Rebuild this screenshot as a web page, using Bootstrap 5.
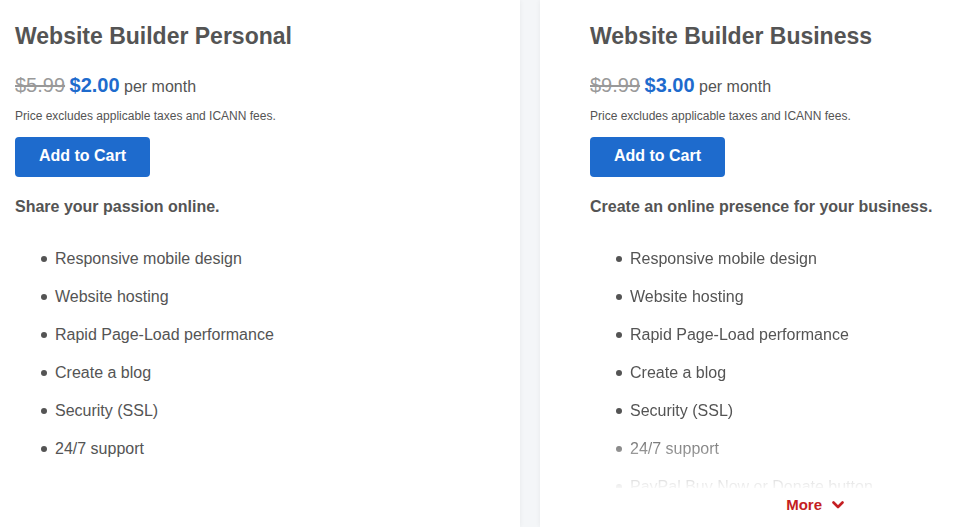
<!DOCTYPE html>
<html lang="en">
<head>
<meta charset="utf-8">
<meta name="viewport" content="width=device-width, initial-scale=1">
<title>Website Builder plans</title>
<link href="https://cdn.jsdelivr.net/npm/bootstrap@5.3.0/dist/css/bootstrap.min.css" rel="stylesheet">
<style>
  body { background: #f4f6f8; color: #545454; font-family: "Liberation Sans", Arial, sans-serif; font-size: 16px; }
  .plans { gap: 20px; }
  .plan { background: #fff; box-shadow: 0 0 5px rgba(0, 0, 0, .06); padding-top: 22px; min-width: 0; }
  .plan-personal { flex: 505 1 0; padding-left: 15px; }
  .plan-business { flex: 386 1 0; padding-left: 50px; }
  .plan-title { font-size: 23px; line-height: 28px; font-weight: 700; margin-bottom: 20px; }
  .price { line-height: 30px; margin-bottom: 2px; }
  .price-old, .price-new { font-size: 20px; }
  .price-old { color: #999; }
  .price-new { color: #1e6bcd; font-weight: 700; }
  .fees { font-size: 12px; line-height: 24px; margin-bottom: 9px; }
  .btn-cart { --bs-btn-bg: #1e6bcd; --bs-btn-color: #fff; --bs-btn-hover-bg: #1859ad; --bs-btn-hover-color: #fff; --bs-btn-border-radius: 4px; width: 135px; height: 40px; line-height: 24px; padding: 7px 0 9px; border: 0; font-weight: 700; }
  .tagline { line-height: 24px; margin: 18px 0 28px; font-weight: 700; }
  .features { padding-left: 26px; margin-bottom: 0; list-style: none; }
  .features li { display: flex; align-items: center; gap: 8px; line-height: 24px; margin-bottom: 14px; }
  .features li::before { content: ""; width: 6px; height: 6px; border-radius: 50%; background: currentColor; }
  .preview { max-height: 241px; overflow: hidden; -webkit-mask-image: linear-gradient(#000 calc(100% - 60px), rgba(0, 0, 0, .05)); mask-image: linear-gradient(#000 calc(100% - 60px), rgba(0, 0, 0, .05)); }
  .more-row { padding-right: 132px; margin-top: 6px; }
  .btn-more { --bs-btn-color: #c41e22; --bs-btn-hover-color: #951418; font-size: 15px; line-height: 22px; font-weight: 700; gap: 10px; }
</style>
</head>
<body>
<main class="plans d-flex min-vh-100">
  <section class="plan plan-personal">
    <h2 class="plan-title">Website Builder Personal</h2>
    <p class="price"><s class="price-old">$5.99</s> <span class="price-new">$2.00</span> per month</p>
    <p class="fees">Price excludes applicable taxes and ICANN fees.</p>
    <button type="button" class="btn btn-cart d-block">Add to Cart</button>
    <p class="tagline">Share your passion online.</p>
    <ul class="features">
      <li>Responsive mobile design</li>
      <li>Website hosting</li>
      <li>Rapid Page-Load performance</li>
      <li>Create a blog</li>
      <li>Security (SSL)</li>
      <li>24/7 support</li>
    </ul>
  </section>
  <section class="plan plan-business">
    <h2 class="plan-title">Website Builder Business</h2>
    <p class="price"><s class="price-old">$9.99</s> <span class="price-new">$3.00</span> per month</p>
    <p class="fees">Price excludes applicable taxes and ICANN fees.</p>
    <button type="button" class="btn btn-cart d-block">Add to Cart</button>
    <p class="tagline">Create an online presence for your business.</p>
    <div class="preview">
      <ul class="features">
        <li>Responsive mobile design</li>
        <li>Website hosting</li>
        <li>Rapid Page-Load performance</li>
        <li>Create a blog</li>
        <li>Security (SSL)</li>
        <li>24/7 support</li>
        <li>PayPal Buy Now or Donate button</li>
      </ul>
    </div>
    <div class="more-row d-flex justify-content-end">
      <button type="button" class="btn btn-more d-inline-flex align-items-center border-0 p-0">More
        <svg width="12" height="8" viewBox="0 0 12 8" fill="none" stroke="currentColor" stroke-width="2.6" stroke-linecap="round" stroke-linejoin="round" aria-hidden="true"><path d="M1.500 1.500 6 6 10.500 1.500"/></svg>
      </button>
    </div>
  </section>
</main>
<script src="https://cdn.jsdelivr.net/npm/bootstrap@5.3.0/dist/js/bootstrap.bundle.min.js"></script>
</body>
</html>
